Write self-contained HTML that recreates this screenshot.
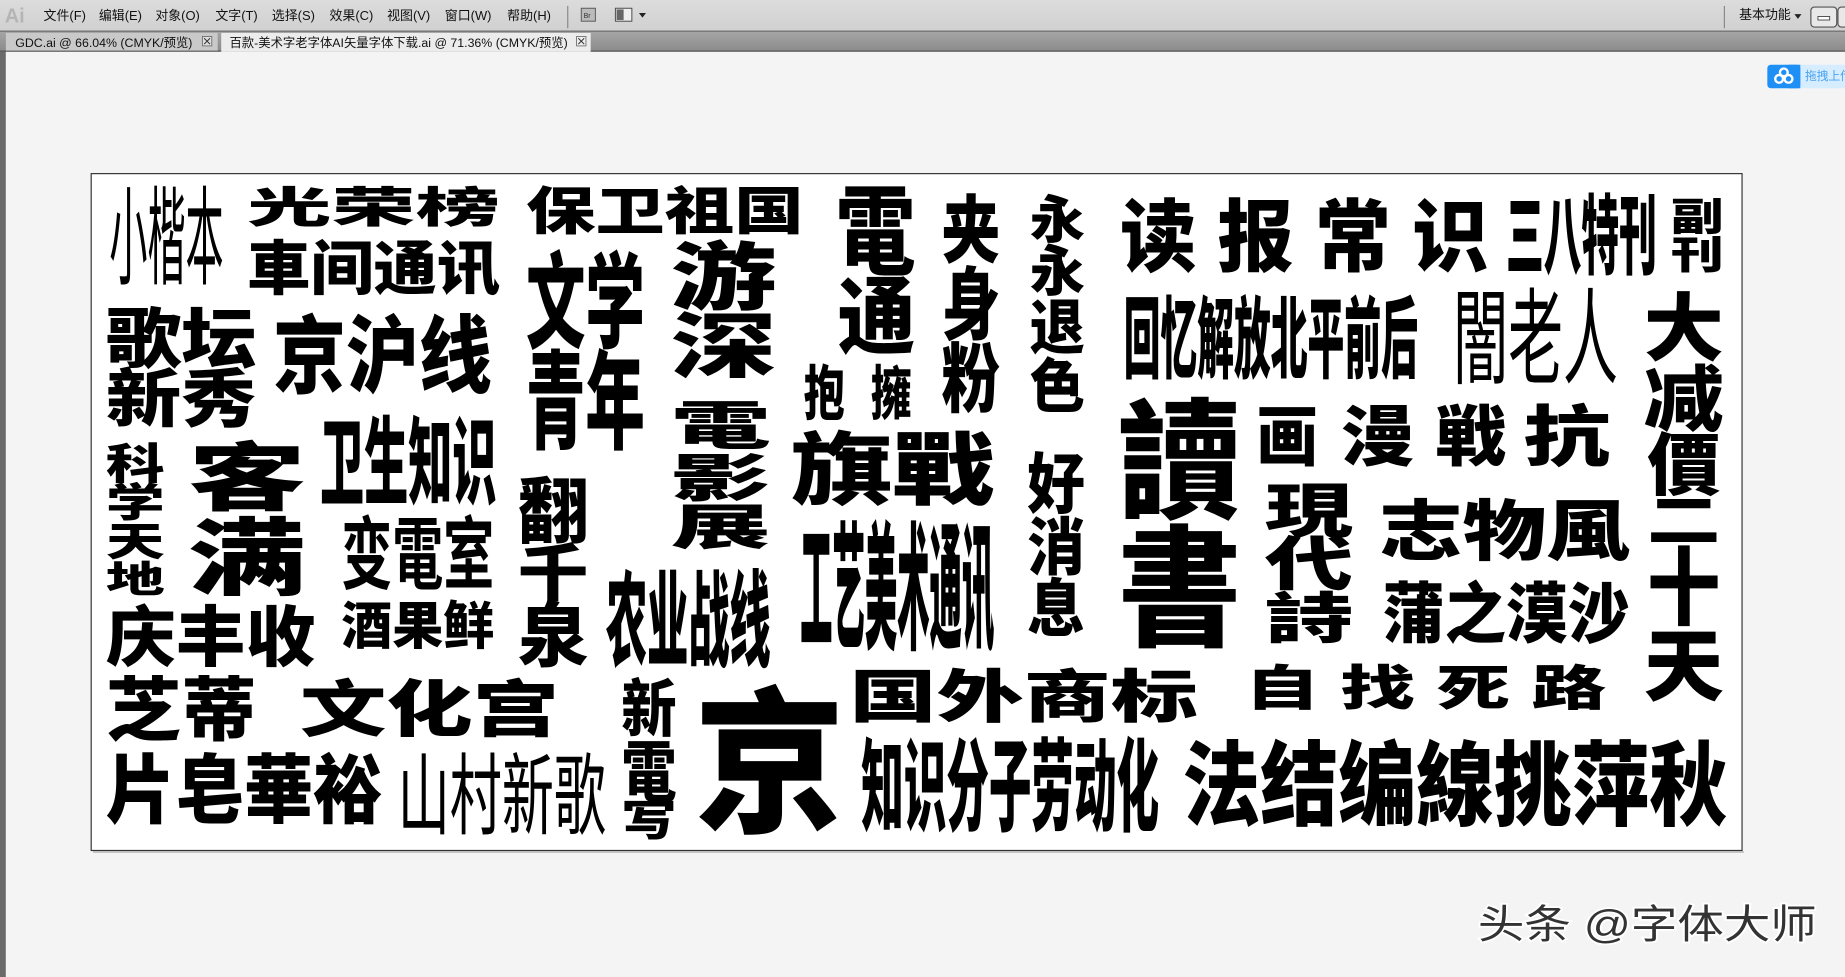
<!DOCTYPE html>
<html><head><meta charset="utf-8">
<style>
html,body{margin:0;padding:0;width:1845px;height:977px;overflow:hidden;background:#f4f4f4}
svg{display:block}
.c{font-family:"Liberation Sans","Noto Sans CJK SC",sans-serif;font-weight:900;fill:#000}
.n{font-family:"Liberation Sans","Noto Sans CJK SC",sans-serif;font-weight:400;fill:#000}
.ui{font-family:"Liberation Sans","Noto Sans CJK SC",sans-serif;font-size:11px;fill:#111}
</style></head><body>
<svg width="1845" height="977" viewBox="0 0 1568 830" preserveAspectRatio="none" xmlns="http://www.w3.org/2000/svg">
<defs>
<linearGradient id="mb" x1="0" y1="0" x2="0" y2="1"><stop offset="0" stop-color="#dcdcdc"/><stop offset="1" stop-color="#d0d0d0"/></linearGradient>
<linearGradient id="tb" x1="0" y1="0" x2="0" y2="1"><stop offset="0" stop-color="#a5a5a5"/><stop offset="1" stop-color="#8a8a8a"/></linearGradient>
</defs>
<!-- menu bar -->
<rect x="0" y="0" width="1568" height="27" fill="url(#mb)"/>
<line x1="0" y1="26.5" x2="1568" y2="26.5" stroke="#555"/>
<text x="4" y="19" style="font-family:'Liberation Sans',sans-serif;font-size:17px;fill:#b5b5b5;font-weight:bold">Ai</text>
<text class="ui" x="37" y="17">文件(F)</text>
<text class="ui" x="84" y="17">编辑(E)</text>
<text class="ui" x="132" y="17">对象(O)</text>
<text class="ui" x="183" y="17">文字(T)</text>
<text class="ui" x="231" y="17">选择(S)</text>
<text class="ui" x="280" y="17">效果(C)</text>
<text class="ui" x="329" y="17">视图(V)</text>
<text class="ui" x="378" y="17">窗口(W)</text>
<text class="ui" x="431" y="17">帮助(H)</text>
<line x1="482.5" y1="5" x2="482.5" y2="24" stroke="#888"/>
<rect x="494" y="7" width="12" height="11" fill="#bbb" stroke="#555" stroke-width="0.8"/>
<text x="496" y="15.5" style="font-family:'Liberation Sans',sans-serif;font-size:6px;fill:#333">Br</text>
<rect x="523" y="7" width="14" height="11" fill="#eee" stroke="#444" stroke-width="0.8"/>
<rect x="524" y="8" width="6" height="9" fill="#666"/>
<path d="M543 11 L549 11 L546 15 Z" fill="#222"/>
<line x1="1465.5" y1="5" x2="1465.5" y2="24" stroke="#888"/>
<text class="ui" x="1478" y="16">基本功能</text>
<path d="M1525 12 L1531 12 L1528 16 Z" fill="#222"/>
<rect x="1539" y="6" width="22" height="17" rx="3" fill="#e8e8e8" stroke="#555"/>
<rect x="1545" y="14" width="10" height="3" fill="#fff" stroke="#333" stroke-width="0.7"/>
<rect x="1562" y="6" width="10" height="17" rx="3" fill="#e8e8e8" stroke="#555"/>
<!-- tab bar -->
<rect x="0" y="27" width="1568" height="17" fill="url(#tb)"/>
<line x1="0" y1="43.5" x2="1568" y2="43.5" stroke="#444"/>
<rect x="5" y="28" width="180" height="15" fill="#c9c9c9"/>
<text class="ui" x="13" y="40" style="font-size:10.5px">GDC.ai @ 66.04% (CMYK/预览)</text>
<rect x="172" y="31" width="8" height="8" fill="#ddd" stroke="#666" stroke-width="0.7"/>
<path d="M173.5 32.5 L178.5 37.5 M178.5 32.5 L173.5 37.5" stroke="#333" stroke-width="0.8"/>
<rect x="188" y="28" width="314" height="16" fill="#ececec"/>
<text class="ui" x="195" y="40" style="font-size:10.5px">百款-美术字老字体AI矢量字体下载.ai @ 71.36% (CMYK/预览)</text>
<rect x="490" y="31" width="8" height="8" fill="#eee" stroke="#666" stroke-width="0.7"/>
<path d="M491.5 32.5 L496.5 37.5 M496.5 32.5 L491.5 37.5" stroke="#333" stroke-width="0.8"/>
<!-- canvas -->
<rect x="0" y="44" width="5" height="786" fill="#6a6a6a"/>
<rect x="5" y="44" width="1563" height="786" fill="#f4f4f4"/>
<!-- baidu button -->
<rect x="1502" y="55" width="70" height="20" rx="3" fill="#d6ecff"/>
<rect x="1502" y="55" width="28" height="20" rx="3" fill="#1e8ff5"/>
<rect x="1520" y="55" width="10" height="20" fill="#1e8ff5"/>
<circle cx="1512" cy="67" r="3.3" fill="none" stroke="#fff" stroke-width="2"/>
<circle cx="1520" cy="67" r="3.3" fill="none" stroke="#fff" stroke-width="2"/>
<circle cx="1516" cy="61.5" r="3.3" fill="none" stroke="#fff" stroke-width="2"/>
<text x="1534" y="68" style="font-family:'Noto Sans CJK SC',sans-serif;font-size:10px;fill:#4aa3f0">拖拽上传</text>
<!-- artboard -->
<rect x="77.5" y="147.5" width="1403" height="575" fill="#fff" stroke="#333" stroke-width="1"/>
<rect x="79" y="723" width="1403" height="1.5" fill="#bbb"/>

<!-- texts -->
<text class="n" x="93" y="234" font-size="91" textLength="97" lengthAdjust="spacingAndGlyphs">小楷本</text>
<text class="c" x="210" y="189" font-size="36" textLength="215" lengthAdjust="spacingAndGlyphs">光荣榜</text>
<text class="c" x="210" y="246" font-size="50" textLength="215" lengthAdjust="spacingAndGlyphs">車间通讯</text>
<text class="c" x="447" y="195" font-size="44" textLength="236" lengthAdjust="spacingAndGlyphs">保卫祖国</text>
<text class="c" x="447" y="289" font-size="89" textLength="101" lengthAdjust="spacingAndGlyphs">文学</text>
<text class="c" x="447" y="374" font-size="91" textLength="101" lengthAdjust="spacingAndGlyphs">青年</text>
<text class="c" x="570" y="258" font-size="63" textLength="90" lengthAdjust="spacingAndGlyphs">游</text>
<text class="c" x="570" y="316" font-size="61" textLength="90" lengthAdjust="spacingAndGlyphs">深</text>
<text class="c" x="710" y="226" font-size="82" textLength="68" lengthAdjust="spacingAndGlyphs">電</text>
<text class="c" x="712" y="295" font-size="72" textLength="66" lengthAdjust="spacingAndGlyphs">通</text>
<text class="c" x="800" y="218" font-size="63" textLength="50" lengthAdjust="spacingAndGlyphs">夹</text>
<text class="c" x="800" y="283" font-size="67" textLength="50" lengthAdjust="spacingAndGlyphs">身</text>
<text class="c" x="800" y="345" font-size="64" textLength="50" lengthAdjust="spacingAndGlyphs">粉</text>
<text class="c" x="875" y="202" font-size="44" textLength="47" lengthAdjust="spacingAndGlyphs">永</text>
<text class="c" x="875" y="247" font-size="47" textLength="47" lengthAdjust="spacingAndGlyphs">永</text>
<text class="c" x="875" y="296" font-size="50" textLength="47" lengthAdjust="spacingAndGlyphs">退</text>
<text class="c" x="875" y="346" font-size="50" textLength="47" lengthAdjust="spacingAndGlyphs">色</text>
<text class="c" x="952" y="225" font-size="67" textLength="313" lengthAdjust="spacingAndGlyphs">读 报 常 识</text>
<text class="c" x="1280" y="227" font-size="74" textLength="128" lengthAdjust="spacingAndGlyphs">三八特刊</text>
<text class="c" x="1420" y="196" font-size="33" textLength="45" lengthAdjust="spacingAndGlyphs">副</text>
<text class="c" x="1420" y="228" font-size="33" textLength="45" lengthAdjust="spacingAndGlyphs">刊</text>
<text class="c" x="90" y="308" font-size="56" textLength="128" lengthAdjust="spacingAndGlyphs">歌坛</text>
<text class="c" x="90" y="358" font-size="54" textLength="128" lengthAdjust="spacingAndGlyphs">新秀</text>
<text class="c" x="232" y="328" font-size="72" textLength="186" lengthAdjust="spacingAndGlyphs">京沪线</text>
<text class="c" x="683" y="352" font-size="50" textLength="35" lengthAdjust="spacingAndGlyphs">抱</text>
<text class="c" x="740" y="352" font-size="50" textLength="35" lengthAdjust="spacingAndGlyphs">擁</text>
<text class="c" x="955" y="315" font-size="76" textLength="250" lengthAdjust="spacingAndGlyphs">回忆解放北平前后</text>
<text class="n" x="1235" y="319" font-size="89" textLength="140" lengthAdjust="spacingAndGlyphs">闇老人</text>
<text class="c" x="1397" y="301" font-size="63" textLength="68" lengthAdjust="spacingAndGlyphs">大</text>
<text class="c" x="1397" y="361" font-size="61" textLength="68" lengthAdjust="spacingAndGlyphs">减</text>
<text class="c" x="1400" y="416" font-size="58" textLength="62" lengthAdjust="spacingAndGlyphs">價</text>
<text class="c" x="1400" y="459" font-size="49" textLength="62" lengthAdjust="spacingAndGlyphs">二</text>
<text class="c" x="1400" y="525" font-size="72" textLength="62" lengthAdjust="spacingAndGlyphs">十</text>
<text class="c" x="1397" y="590" font-size="67" textLength="68" lengthAdjust="spacingAndGlyphs">天</text>
<text class="c" x="272" y="422" font-size="81" textLength="150" lengthAdjust="spacingAndGlyphs">卫生知识</text>
<text class="c" x="90" y="407" font-size="36" textLength="50" lengthAdjust="spacingAndGlyphs">科</text>
<text class="c" x="90" y="439" font-size="34" textLength="50" lengthAdjust="spacingAndGlyphs">学</text>
<text class="c" x="90" y="472" font-size="34" textLength="50" lengthAdjust="spacingAndGlyphs">天</text>
<text class="c" x="90" y="503" font-size="31" textLength="50" lengthAdjust="spacingAndGlyphs">地</text>
<text class="c" x="160" y="428" font-size="63" textLength="100" lengthAdjust="spacingAndGlyphs">客</text>
<text class="c" x="160" y="500" font-size="72" textLength="100" lengthAdjust="spacingAndGlyphs">满</text>
<text class="c" x="570" y="377" font-size="44" textLength="85" lengthAdjust="spacingAndGlyphs">電</text>
<text class="c" x="570" y="422" font-size="44" textLength="85" lengthAdjust="spacingAndGlyphs">影</text>
<text class="c" x="570" y="462" font-size="41" textLength="85" lengthAdjust="spacingAndGlyphs">展</text>
<text class="c" x="672" y="423" font-size="67" textLength="173" lengthAdjust="spacingAndGlyphs">旗戰</text>
<text class="c" x="873" y="431" font-size="56" textLength="49" lengthAdjust="spacingAndGlyphs">好</text>
<text class="c" x="873" y="484" font-size="53" textLength="49" lengthAdjust="spacingAndGlyphs">消</text>
<text class="c" x="873" y="536" font-size="53" textLength="49" lengthAdjust="spacingAndGlyphs">息</text>
<text class="c" x="950" y="432" font-size="111" textLength="105" lengthAdjust="spacingAndGlyphs">讀</text>
<text class="c" x="950" y="540" font-size="111" textLength="105" lengthAdjust="spacingAndGlyphs">書</text>
<text class="c" x="1068" y="391" font-size="56" textLength="52" lengthAdjust="spacingAndGlyphs">画</text>
<text class="c" x="1140" y="391" font-size="56" textLength="62" lengthAdjust="spacingAndGlyphs">漫</text>
<text class="c" x="1220" y="391" font-size="56" textLength="60" lengthAdjust="spacingAndGlyphs">戦</text>
<text class="c" x="1295" y="391" font-size="56" textLength="73" lengthAdjust="spacingAndGlyphs">抗</text>
<text class="c" x="1075" y="452" font-size="50" textLength="75" lengthAdjust="spacingAndGlyphs">現</text>
<text class="c" x="1075" y="497" font-size="50" textLength="75" lengthAdjust="spacingAndGlyphs">代</text>
<text class="c" x="1075" y="542" font-size="47" textLength="75" lengthAdjust="spacingAndGlyphs">詩</text>
<text class="c" x="1172" y="471" font-size="56" textLength="213" lengthAdjust="spacingAndGlyphs">志物風</text>
<text class="c" x="1175" y="541" font-size="56" textLength="210" lengthAdjust="spacingAndGlyphs">蒲之漠沙</text>
<text class="c" x="440" y="456" font-size="61" textLength="60" lengthAdjust="spacingAndGlyphs">翻</text>
<text class="c" x="440" y="506" font-size="53" textLength="60" lengthAdjust="spacingAndGlyphs">千</text>
<text class="c" x="440" y="561" font-size="59" textLength="60" lengthAdjust="spacingAndGlyphs">泉</text>
<text class="c" x="290" y="495" font-size="67" textLength="130" lengthAdjust="spacingAndGlyphs" style="font-weight:700">变電室</text>
<text class="c" x="290" y="547" font-size="44" textLength="130" lengthAdjust="spacingAndGlyphs">酒果鲜</text>
<text class="c" x="515" y="559" font-size="89" textLength="140" lengthAdjust="spacingAndGlyphs">农业战线</text>
<text class="c" x="680" y="542" font-size="117" textLength="165" lengthAdjust="spacingAndGlyphs">工艺美术通讯</text>
<text class="c" x="90" y="561" font-size="56" textLength="178" lengthAdjust="spacingAndGlyphs">庆丰收</text>
<text class="c" x="90" y="624" font-size="59" textLength="128" lengthAdjust="spacingAndGlyphs">芝蒂</text>
<text class="c" x="255" y="621" font-size="52" textLength="220" lengthAdjust="spacingAndGlyphs">文化宫</text>
<text class="c" x="528" y="621" font-size="53" textLength="47" lengthAdjust="spacingAndGlyphs">新</text>
<text class="c" x="528" y="676" font-size="56" textLength="47" lengthAdjust="spacingAndGlyphs">電</text>
<text class="c" x="528" y="710" font-size="36" textLength="47" lengthAdjust="spacingAndGlyphs">写</text>
<text class="c" x="590" y="696" font-size="133" textLength="128" lengthAdjust="spacingAndGlyphs">京</text>
<text class="c" x="722" y="609" font-size="49" textLength="296" lengthAdjust="spacingAndGlyphs">国外商标</text>
<text class="c" x="1058" y="599" font-size="41" textLength="307" lengthAdjust="spacingAndGlyphs">自 找 死 路</text>
<text class="c" x="90" y="694" font-size="64" textLength="235" lengthAdjust="spacingAndGlyphs">片皂華裕</text>
<text class="n" x="338" y="703" font-size="76" textLength="177" lengthAdjust="spacingAndGlyphs">山村新歌</text>
<text class="c" x="732" y="699" font-size="86" textLength="253" lengthAdjust="spacingAndGlyphs">知识分子劳动化</text>
<text class="c" x="1005" y="695" font-size="78" textLength="463" lengthAdjust="spacingAndGlyphs">法结编線挑萍秋</text>

<!-- watermark -->
<text x="1256" y="797" style="font-family:'Liberation Sans','Noto Sans CJK SC',sans-serif;font-size:34px;fill:#333;stroke:#fff;stroke-width:3px;paint-order:stroke" textLength="288" lengthAdjust="spacingAndGlyphs">头条 @字体大师</text>
</svg>
</body></html>
